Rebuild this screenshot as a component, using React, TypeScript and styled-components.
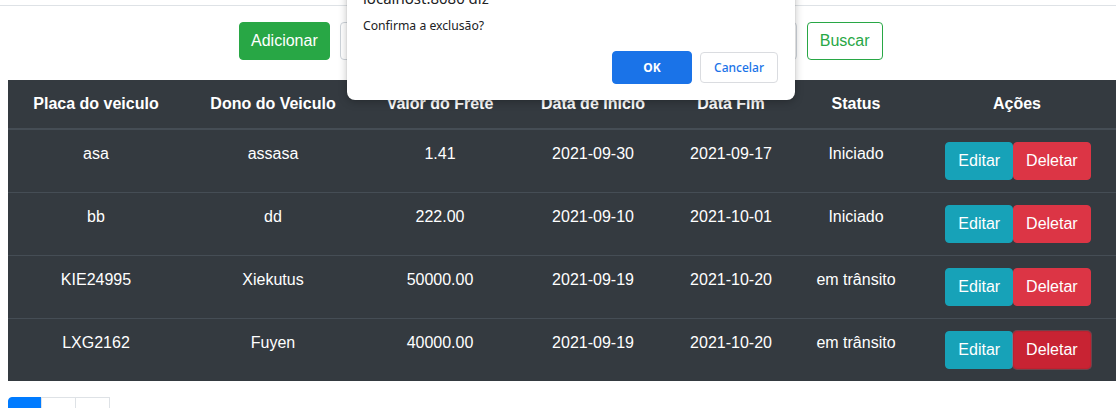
import React from "react";
import styled, { createGlobalStyle, css } from "styled-components";

const Global = createGlobalStyle`
  html, body { margin: 0; padding: 0; overflow: hidden; background: #fff; }
  body { font-family: "Liberation Sans", Arial, sans-serif; font-size: 16px; color: #212529; }
  * { box-sizing: border-box; }
`;

const Page = styled.div`
  position: relative;
  width: 1116px;
  height: 408px;
  overflow: hidden;
`;

const TopLine = styled.div`
  height: 6px;
  border-bottom: 1px solid #dee2e6;
`;

const Toolbar = styled.div`
  display: flex;
  align-items: center;
  padding-left: 239px;
  margin-top: 16px;
`;

const Btn = styled.button<{ $variant: "success" | "outline" | "info" | "danger" | "dangerActive" }>`
  font-family: "Liberation Sans", Arial, sans-serif;
  font-size: 16px;
  line-height: 24px;
  padding: 6px 12px;
  border-radius: 4px;
  border: 1px solid transparent;
  cursor: pointer;
  white-space: nowrap;
  ${(p) =>
    p.$variant === "success" &&
    css`
      padding: 6px 11px;
      background: #28a745;
      border-color: #28a745;
      color: #fff;
    `}
  ${(p) =>
    p.$variant === "outline" &&
    css`
      background: #fff;
      border-color: #28a745;
      color: #28a745;
    `}
  ${(p) =>
    p.$variant === "info" &&
    css`
      background: #17a2b8;
      border-color: #17a2b8;
      color: #fff;
    `}
  ${(p) =>
    p.$variant === "danger" &&
    css`
      background: #dc3545;
      border-color: #dc3545;
      color: #fff;
    `}
  ${(p) =>
    p.$variant === "dangerActive" &&
    css`
      background: #c82333;
      border-color: #bd2130;
      color: #fff;
      box-shadow: 0 0 0 1px rgba(225, 83, 97, 0.35);
    `}
`;

const SearchInput = styled.input`
  width: 457px;
  height: 38px;
  margin: 0 10px;
  border: 1px solid #ced4da;
  border-radius: 4px;
  padding: 6px 12px;
  font-size: 16px;
  font-family: "Liberation Sans", Arial, sans-serif;
`;

const Table = styled.table`
  margin: 20px 0 0 8px;
  width: 1108px;
  border-collapse: collapse;
  background: #343a40;
  color: #fff;
  table-layout: fixed;
`;

const Th = styled.th<{ $w: number }>`
  width: ${(p) => p.$w}px;
  padding: 12px 4px;
  font-weight: bold;
  text-align: center;
  line-height: 24px;
  border-bottom: 2px solid #454d55;
`;

const Td = styled.td`
  padding: 12px 4px;
  text-align: center;
  vertical-align: top;
  line-height: 24px;
  border-top: 1px solid #454d55;
`;

const ActionGroup = styled.div`
  display: flex;
  justify-content: center;
  padding-left: 2px;
`;

const Pagination = styled.ul`
  display: flex;
  list-style: none;
  margin: 16px 0 0 8px;
  padding: 0;
`;

const PageItem = styled.li<{ $active?: boolean }>`
  width: 35px;
  height: 38px;
  line-height: 20px;
  padding: 8px 0;
  text-align: center;
  font-size: 16px;
  border: 1px solid ${(p) => (p.$active ? "#007bff" : "#dee2e6")};
  background: ${(p) => (p.$active ? "#007bff" : "#fff")};
  color: ${(p) => (p.$active ? "#fff" : "#007bff")};
  margin-left: -1px;
  &:first-child {
    margin-left: 0;
    width: 34px;
    border-radius: 4px 0 0 4px;
  }
`;

const Dialog = styled.div`
  position: absolute;
  left: 347px;
  top: -12px;
  width: 448px;
  background: #fff;
  border-radius: 0 0 8px 8px;
  box-shadow: 0 2px 8px rgba(0, 0, 0, 0.25), 0 0 1px rgba(0, 0, 0, 0.3);
  padding: 0 17px 16px 16px;
  font-family: "Noto Sans", "Open Sans", sans-serif;
  color: #202124;
`;

const DialogTitle = styled.div`
  font-size: 15px;
  line-height: 20px;
  height: 20px;
`;

const DialogMessage = styled.div`
  margin-top: 9px;
  font-size: 12.2px;
  line-height: 18px;
  color: #202124;
`;

const DialogActions = styled.div`
  display: flex;
  justify-content: flex-end;
  align-items: center;
  gap: 8px;
  margin-top: 16px;
`;

const DialogBtn = styled.button<{ $primary?: boolean }>`
  font-family: "Noto Sans", "Open Sans", sans-serif;
  font-size: 12px;
  font-weight: ${(p) => (p.$primary ? 700 : 500)};
  border-radius: 4px;
  cursor: pointer;
  ${(p) =>
    p.$primary
      ? css`
          width: 80px;
          height: 33px;
          background: #1a73e8;
          color: #fff;
          border: 1px solid #1a73e8;
        `
      : css`
          width: 78px;
          height: 31px;
          background: #fff;
          color: #1a73e8;
          border: 1px solid #dadce0;
        `}
`;

const cols = [
  { label: "Placa do veiculo", w: 176 },
  { label: "Dono do Veiculo", w: 178 },
  { label: "Valor do Frete", w: 156 },
  { label: "Data de Início", w: 150 },
  { label: "Data Fim", w: 126 },
  { label: "Status", w: 124 },
  { label: "Ações", w: 198 },
];

const rows = [
  ["asa", "assasa", "1.41", "2021-09-30", "2021-09-17", "Iniciado"],
  ["bb", "dd", "222.00", "2021-09-10", "2021-10-01", "Iniciado"],
  ["KIE24995", "Xiekutus", "50000.00", "2021-09-19", "2021-10-20", "em trânsito"],
  ["LXG2162", "Fuyen", "40000.00", "2021-09-19", "2021-10-20", "em trânsito"],
];

export default function App() {
  return (
    <Page>
      <Global />
      <TopLine />
      <Toolbar>
        <Btn $variant="success">Adicionar</Btn>
        <SearchInput />
        <Btn $variant="outline">Buscar</Btn>
      </Toolbar>
      <Table>
        <thead>
          <tr>
            {cols.map((c) => (
              <Th key={c.label} $w={c.w}>
                {c.label}
              </Th>
            ))}
          </tr>
        </thead>
        <tbody>
          {rows.map((r, i) => (
            <tr key={i}>
              {r.map((v, j) => (
                <Td key={j}>{v}</Td>
              ))}
              <Td>
                <ActionGroup>
                  <Btn $variant="info">Editar</Btn>
                  <Btn $variant={i === 3 ? "dangerActive" : "danger"}>Deletar</Btn>
                </ActionGroup>
              </Td>
            </tr>
          ))}
        </tbody>
      </Table>
      <Pagination>
        <PageItem $active>1</PageItem>
        <PageItem>2</PageItem>
        <PageItem>3</PageItem>
      </Pagination>
      <Dialog>
        <DialogTitle>localhost:8080 diz</DialogTitle>
        <DialogMessage>Confirma a exclusão?</DialogMessage>
        <DialogActions>
          <DialogBtn $primary>OK</DialogBtn>
          <DialogBtn>Cancelar</DialogBtn>
        </DialogActions>
      </Dialog>
    </Page>
  );
}
